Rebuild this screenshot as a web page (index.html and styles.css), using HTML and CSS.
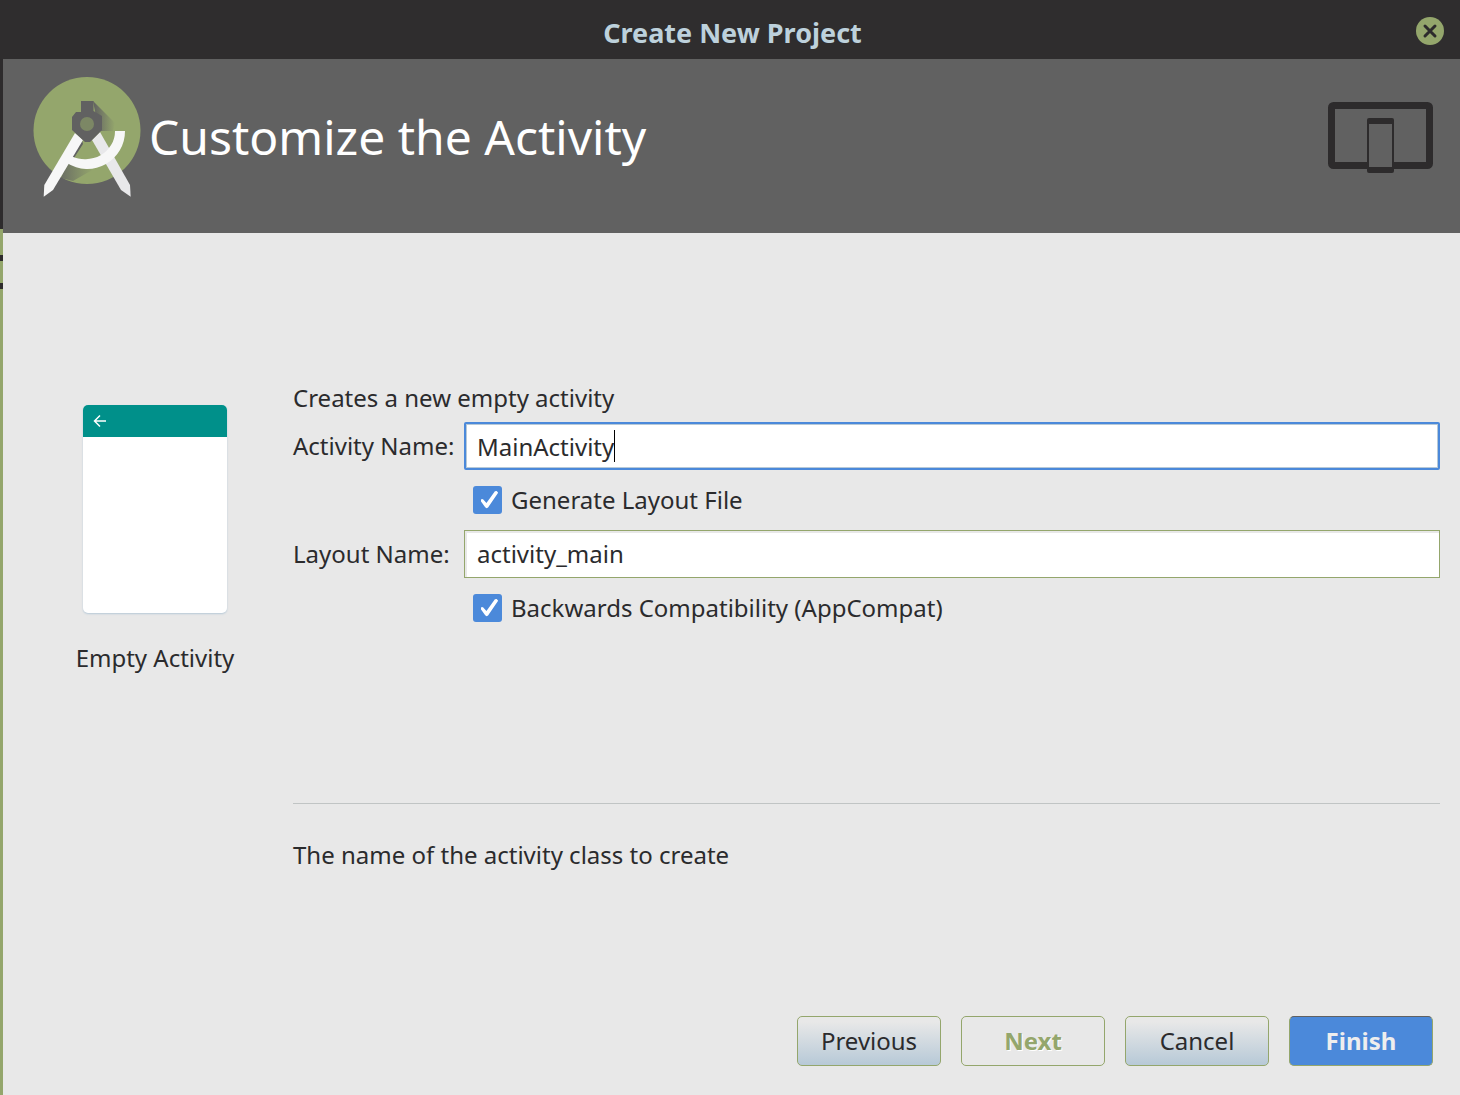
FILE: index.html
```html
<!DOCTYPE html>
<html lang="en">
<head>
<meta charset="utf-8">
<title>Create New Project</title>
<link rel="stylesheet" href="styles.css">
</head>
<body>
<header class="titlebar">
  <h1 class="titlebar-text">Create New Project</h1>
  <button class="close" type="button" aria-label="Close">
    <svg width="28" height="28" viewBox="0 0 28 28"><circle cx="14" cy="14" r="14" fill="#94a66c"/><path d="M9 9l10 10M19 9l-10 10" stroke="#2d2b2c" stroke-width="3" stroke-linecap="round"/></svg>
  </button>
</header>
<div class="window">
  <div class="edge" aria-hidden="true"></div>
  <div class="content">
    <div class="banner">
      <svg class="logo" width="108" height="122" viewBox="0 0 108 122">
        <defs>
          <linearGradient id="shade" x1="0" y1="0" x2="1" y2="0"><stop offset="0" stop-color="#616161"/><stop offset="1" stop-color="#616161" stop-opacity="0"/></linearGradient>
          <linearGradient id="shade-leg" x1="0" y1="0" x2="1" y2="0"><stop offset="0" stop-color="#616161" stop-opacity=".8"/><stop offset="1" stop-color="#616161" stop-opacity="0"/></linearGradient>
        </defs>
        <circle cx="54" cy="54.500" r="53.500" fill="#94a66c"/>
        <path d="M60 25l22 22-2 8H66z" fill="url(#shade)"/>
        <path d="M34 86l14 6.500 12 1.500-6 3-14 8-12-3z" fill="url(#shade-leg)"/>
        <path d="M49 64l-12 20 4-2 9-14z" fill="#616161"/>
        <path d="M59 64l8-8 30 53 .7 11.700L88 114z" fill="#e8e8ea"/>
        <path d="M92 55A37.700 37.700 0 0 1 34 87L38 80A30 28 0 0 0 82 55z" fill="#f7f7f7"/>
        <path d="M42 57l8 7-30 50-9.300 6.700L11.300 109z" fill="#f7f7f7"/>
        <path d="M48 25h12.500v10L69 40v14L57 66h-5L39 54V41l4-5h5z" fill="#616161"/>
        <circle cx="54" cy="48" r="7" fill="#7c8765"/>
      </svg>
      <h2 class="heading">Customize the Activity</h2>
      <svg class="devices" width="105" height="72" viewBox="0 0 105 72">
        <rect x="3.500" y="3.500" width="98" height="60" rx="2" fill="none" stroke="#2d2b2c" stroke-width="7"/>
        <rect x="39" y="16" width="27" height="55" rx="2" fill="#2d2b2c"/>
        <rect x="41" y="22" width="23" height="43" fill="#616161"/>
      </svg>
    </div>
    <form class="form">
      <div class="columns">
        <figure class="template">
          <div class="phone"><div class="appbar">
            <svg width="14" height="14" viewBox="0 0 14 14"><path d="M13 7H2M7 1.500L1.500 7L7 12.500" fill="none" stroke="#fff" stroke-width="1.500"/></svg>
          </div></div>
          <figcaption>Empty Activity</figcaption>
        </figure>
        <div class="details">
          <p class="intro">Creates a new empty activity</p>
          <div class="fields">
            <label for="activity">Activity Name:</label>
            <div class="focused"><input class="text" id="activity" type="text" value="MainActivity"><span class="caret"></span></div>
            <label class="check"><input type="checkbox" checked>Generate Layout File</label>
            <label for="layout">Layout Name:</label>
            <input class="text" id="layout" type="text" value="activity_main">
            <label class="check"><input type="checkbox" checked>Backwards Compatibility (AppCompat)</label>
          </div>
          <hr class="rule">
          <p class="help">The name of the activity class to create</p>
        </div>
      </div>
      <div class="actions">
        <button class="btn" type="button">Previous</button>
        <button class="btn next" type="button" disabled>Next</button>
        <button class="btn" type="button">Cancel</button>
        <button class="btn finish" type="submit">Finish</button>
      </div>
    </form>
  </div>
</div>
</body>
</html>
```
FILE: styles.css
```css
* { box-sizing: border-box; }

body {
  margin: 0;
  min-height: 100vh;
  display: flex;
  flex-direction: column;
  background: #e8e8e8;
  color: #2b2b2d;
  font: 24px/32px "Noto Sans", sans-serif;
}

h1, h2, p, figure { margin: 0; }

.titlebar {
  display: grid;
  grid-template-columns: 1fr auto 1fr;
  align-items: center;
  height: 59px;
  padding: 2px 16px 0 21px;
  background: #2f2d2e;
}
.titlebar-text {
  grid-column: 2;
  padding-top: 4px;
  color: #bdd1dc;
  font-size: 27px;
  line-height: 32px;
  font-weight: 700;
}
.close {
  justify-self: end;
  display: flex;
  padding: 0;
  border: 0;
  background: none;
}

.window { flex: 1; display: flex; }
.edge {
  width: 3px;
  background: linear-gradient(#2d2b2c 170px, #94a66c 170px 196px, #2d2b2c 196px 202px, #94a66c 202px 224px, #2d2b2c 224px 230px, #94a66c 230px);
}
.content { flex: 1; display: flex; flex-direction: column; }

.banner {
  display: flex;
  align-items: flex-start;
  height: 174px;
  padding: 17px 27px 0 30px;
  background: #616161;
}
.heading {
  flex: 1;
  padding: 29px 0 0 8px;
  color: #fff;
  font-size: 48px;
  line-height: 64px;
  font-weight: 400;
}
.devices { margin-top: 26px; }

.form {
  flex: 1;
  display: flex;
  flex-direction: column;
  justify-content: space-between;
  padding: 149px 20px 29px 72px;
}
.columns { display: flex; gap: 56px; }

.template {
  width: 162px;
  padding-top: 23px;
}
.phone {
  width: 144px;
  height: 208px;
  margin: 0 8px 29px;
  overflow: hidden;
  border-radius: 5px;
  background: #fff;
  box-shadow: 0 1px 2px #b7c9d7;
}
.template figcaption {
  width: 160px;
  text-align: center;
  white-space: nowrap;
}
.appbar {
  display: flex;
  align-items: center;
  height: 32px;
  padding-left: 10px;
  background: #00908a;
}

.details { flex: 1; }
.intro { margin-bottom: 8px; }
.fields {
  display: grid;
  grid-template-columns: 171px 1fr;
  grid-auto-rows: 48px;
  row-gap: 6px;
  align-items: center;
}
.text {
  display: block;
  width: 100%;
  height: 48px;
  padding: 0 12px 1px;
  border: 1px solid #94a66c;
  border-radius: 0;
  outline: 0;
  background: #fff;
  box-shadow: inset 2px 2px #e8e8e8;
  color: inherit;
  font: inherit;
}
.focused { position: relative; }
.focused .text {
  padding: 0 11px;
  border: 2px solid #4b89da;
  border-radius: 2px;
  box-shadow: inset 0 0 0 1px #b7c9d7;
}
.caret {
  position: absolute;
  top: 8px;
  left: 150px;
  width: 1px;
  height: 32px;
  background: #000;
}
.check {
  grid-column: 2;
  display: flex;
  align-items: center;
  gap: 9px;
  padding-left: 9px;
}
.check input {
  appearance: none;
  display: grid;
  place-items: center;
  width: 29px;
  height: 28px;
  margin: 0;
  border-radius: 3px;
  background: #4b89da;
}
.check input:checked::before {
  content: "";
  width: 18px;
  height: 18px;
  margin-left: 4px;
  background: #fff;
  clip-path: polygon(0 54%, 6% 44%, 14% 46%, 33% 66%, 80% 2%, 90% 0, 98% 10%, 42% 92%, 34% 96%, 26% 90%);
}
.rule {
  margin: 171px 0 35px;
  border: 0;
  border-top: 1px solid #c0c4c4;
}

.actions {
  display: flex;
  justify-content: flex-end;
  gap: 20px;
  padding-right: 7px;
}
.btn {
  width: 144px;
  height: 50px;
  padding: 0;
  border: 1px solid #94a66c;
  border-radius: 5px;
  background: linear-gradient(#e8e8e8 10%, #b7c9d7);
  color: #2b2b2d;
  font: inherit;
}
.btn.next {
  background: none;
  color: #94a66c;
  font-weight: 700;
  text-shadow: 1px 1px #fff;
}
.btn.finish {
  border-top-color: #616161;
  background: #4b89da;
  color: #eee;
  font-weight: 700;
}
```
